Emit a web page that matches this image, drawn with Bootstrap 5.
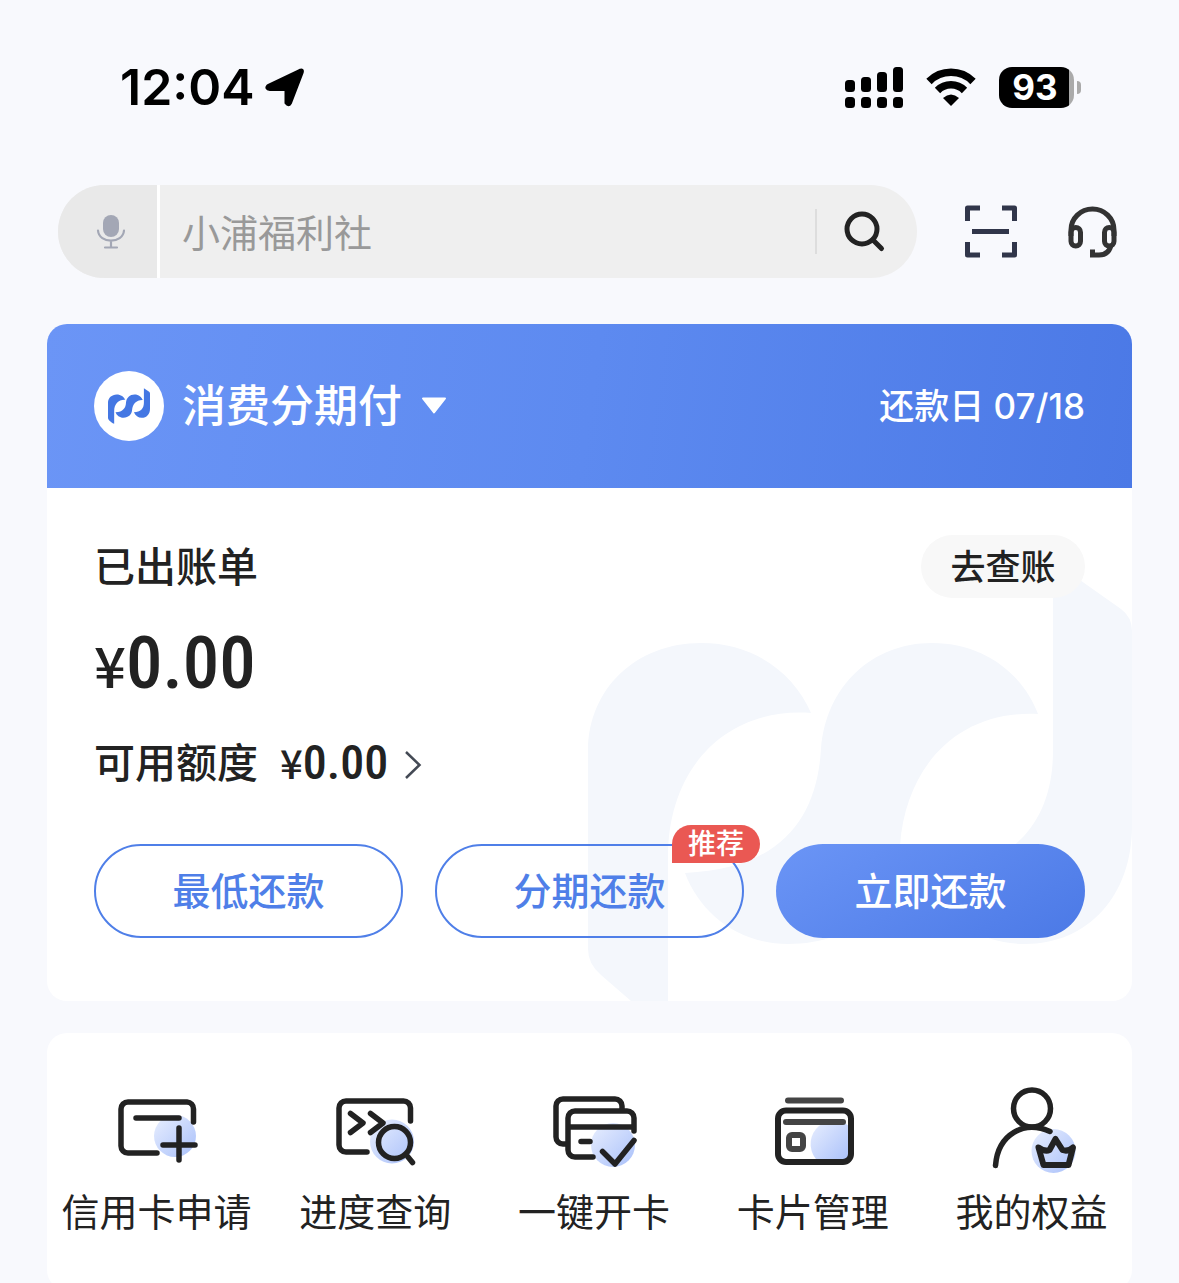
<!DOCTYPE html>
<html lang="zh-CN">
<head>
<meta charset="utf-8">
<meta name="viewport" content="width=device-width, initial-scale=1">
<title>消费分期付</title>
<link href="https://cdn.jsdelivr.net/npm/bootstrap@5.3.0/dist/css/bootstrap.min.css" rel="stylesheet">
<style>
  body { background: #f8f9fd; color: #222; font-family: Inter, "Noto Sans CJK SC", sans-serif; }
  svg { display: block; flex: none; }
  .status-bar { padding: 56px 98px 0 120px; height: 118px; color: #000; }
  .clock { font-size: 50px; line-height: 62px; font-weight: 600; margin-right: 10px; }
  .wifi-mark { margin: 0 23px; }
  .battery-body { width: 75px; height: 41px; border-radius: 13px; background: linear-gradient(90deg, #000 70px, #aaa 70px); color: #fff; font-size: 35px; line-height: 41px; font-weight: 700; padding-right: 3px; }
  .battery-tip { width: 4px; height: 13px; margin-left: 3px; border-radius: 0 6px 6px 0; background: #aaa; }
  .top-tools { margin-top: 67px; padding: 0 61px 0 58px; gap: 48px; }
  .search-pill { height: 93px; background: #efefef; }
  .mic-btn { flex: none; width: 102px; background: #e9e9e9; border: 0; border-right: 3px solid #fff; padding: 0 0 0 6px; }
  .search-box, .search-box:focus { background: transparent; font-size: 38px; line-height: 50px; padding: 3px 0 0 22px; box-shadow: none; color: #222; }
  .search-box::placeholder { color: #999; opacity: 1; }
  .search-go { flex: none; width: 100px; border: 0; background: transparent; padding: 0 4px 0 0; }
  .search-rule { flex: none; width: 2px; height: 45px; background: #ddd; }
  .plain-btn { border: 0; background: transparent; padding: 0; color: inherit; }
  .panel { margin: 0 47px; border-radius: 20px; background: #fff; }
  .bill { margin-top: 46px; }
  .bill-head { height: 164px; padding: 0 47px; color: #fff; background: linear-gradient(98deg, #6b95f6, #5d8af0 50%, #4b79e6); }
  .brand-disc { width: 70px; height: 70px; }
  .product-name { font-size: 44px; line-height: 60px; font-weight: 500; margin: 0 18px; }
  .due-date { font-size: 35px; line-height: 50px; font-weight: 500; }
  .bill-body { padding: 47px 47px 63px; }
  .watermark { top: 73px; right: 0; color: #f4f7fc; }
  .label-lg { font-size: 41px; line-height: 50px; font-weight: 500; }
  .check-btn { width: 164px; height: 63px; background: #f8f8f8; font-size: 35px; line-height: 50px; font-weight: 500; }
  .figure-text { font-family: "Roboto Condensed", Roboto, sans-serif; font-weight: 500; }
  .amount { margin-top: 25px; font-size: 73px; line-height: 80px; }
  .yen { font-family: "Noto Sans CJK SC", sans-serif; font-weight: 500; line-height: 1px; }
  .amount .yen { font-size: 56px; }
  .limit-row { margin-top: 35px; }
  .limit-value { font-size: 48px; line-height: 50px; margin: 0 16px 0 22px; }
  .limit-value .yen { font-size: 40px; }
  .pay-row { margin-top: 56px; gap: 32px; }
  .pay-btn { height: 94px; font-size: 38px; line-height: 50px; font-weight: 500; border: 2px solid #4f7fe8; color: #4f7fe8; background: transparent; padding: 0; }
  .pay-btn-main { border-color: transparent; color: #fff; background: linear-gradient(150deg, #6b95f6, #4b79e6) border-box; }
  .hint-tag { top: -21px; right: -18px; width: 88px; height: 38px; border-radius: 19px 19px 19px 0; background: #ea5853; color: #fff; font-size: 28px; line-height: 38px; }
  .services { margin-top: 32px; padding: 47px 0 53px; }
  .service-row { margin-right: -9px; }
  .service-name { font-size: 38px; line-height: 50px; margin-top: 7px; color: #222; }
</style>
<script src="https://cdn.jsdelivr.net/npm/bootstrap@5.3.0/dist/js/bootstrap.bundle.min.js"></script>
</head>
<body>
<svg width="0" height="0" class="position-absolute" aria-hidden="true">
  <defs>
    <linearGradient id="glow" x1="0" y1="0" x2="1" y2="1"><stop offset="0" stop-color="#e9effe"/><stop offset="1" stop-color="#a9c0fa"/></linearGradient>
    <symbol id="brand" viewBox="0 0 544 462">
      <path fill="currentColor" d="M0 190C0 128 48 82 113 82C166 82 206 112 223 152C140 146 80 205 80 296V462Q62 457 43 440L13 414Q0 403 0 388Z"/>
      <path fill="currentColor" d="M344 82C284 82 238 125 233 188C229 255 195 308 97 312C112 352 150 383 200 383C268 383 308 340 312 284C318 205 370 149 450 153C436 115 398 82 344 82Z"/>
      <path fill="currentColor" d="M465 0L533 48Q544 56 544 70V265C544 335 500 383 437 383C392 383 352 358 336 312C420 312 465 265 465 190Z"/>
    </symbol>
  </defs>
</svg>

<div class="vh-100 overflow-hidden">
  <div class="status-bar d-flex align-items-center justify-content-between">
    <div class="d-flex align-items-center">
      <span class="clock">12:04</span>
      <svg width="40" height="40" viewBox="0 0 40 40"><path d="M3 18.500 34.500 3.500Q38.500 2 37 6L25.500 36Q23.500 39.500 21 36V22.500H5Q0 21.500 3 18.500Z" stroke="#000" stroke-width="3" stroke-linejoin="round"/></svg>
    </div>
    <div class="d-flex align-items-center">
      <svg width="58" height="41" viewBox="0 0 58 41"><rect y="13" width="10" height="12" rx="3.500"/><rect x="16" y="10" width="10" height="15" rx="3.500"/><rect x="32" y="5" width="10" height="20" rx="3.500"/><rect x="48" width="10" height="25" rx="3.500"/><rect y="30" width="10" height="11" rx="3.500"/><rect x="16" y="30" width="10" height="11" rx="3.500"/><rect x="32" y="30" width="10" height="11" rx="3.500"/><rect x="48" y="30" width="10" height="11" rx="3.500"/></svg>
      <svg class="wifi-mark" width="50" height="38" viewBox="0 0 50 38"><g fill="none" stroke="#000" stroke-width="7.500"><path d="M3 13.500A31 31 0 0 1 47 13.500"/><path d="M11.500 22.500A19 19 0 0 1 38.500 22.500"/></g><path d="M25 38 17 30Q25 23 33 30Z"/></svg>
      <div class="battery-body text-center">93</div>
      <div class="battery-tip"></div>
    </div>
  </div>

  <form class="top-tools d-flex align-items-center">
    <div class="search-pill d-flex align-items-stretch flex-grow-1 rounded-pill overflow-hidden">
      <button type="button" class="mic-btn d-flex align-items-center justify-content-center" aria-label="语音">
        <svg width="30" height="36" viewBox="0 0 30 36"><rect x="7" y="1" width="16" height="22" rx="8" fill="#a3a7b5"/><path d="M2 16.500C3 30 27 30 28 16.500M15 27V33M9 33.500H21" fill="none" stroke="#a3a7b5" stroke-width="2.200" stroke-linecap="round"/></svg>
      </button>
      <input class="search-box form-control border-0 rounded-0" type="text" placeholder="小浦福利社" aria-label="搜索">
      <span class="search-rule align-self-center"></span>
      <button type="submit" class="search-go d-flex align-items-center justify-content-center" aria-label="查找">
        <svg width="42" height="42" viewBox="0 0 42 42" fill="none" stroke="#222" stroke-width="5" stroke-linecap="round"><circle cx="18" cy="18" r="15"/><path d="M29 29 37.500 37.500"/></svg>
      </button>
    </div>
    <button type="button" class="plain-btn" aria-label="扫一扫"><svg width="53" height="53" viewBox="0 0 53 53" fill="none" stroke="#31364a" stroke-width="5" stroke-linejoin="round"><path d="M15 3H2.500V16M37 3H49.500V16M15 50H2.500V37M37 50H49.500V37"/><path d="M7 26.500H44"/></svg></button>
    <button type="button" class="plain-btn" aria-label="客服"><svg width="52" height="52" viewBox="-2 0 52 52" fill="none" stroke="#333" stroke-width="5"><path d="M3 30V24A21.500 21 0 0 1 46 24V30"/><rect x="3" y="21.500" width="9.500" height="18.500" rx="4.750"/><rect x="36.500" y="21.500" width="9.500" height="18.500" rx="4.750"/><path d="M43 39Q41 49 31 49H24.500V43.500"/></svg></button>
  </form>

  <main>
    <section class="panel bill overflow-hidden">
      <div class="bill-head d-flex align-items-center justify-content-between">
        <button type="button" class="plain-btn d-flex align-items-center">
          <span class="brand-disc rounded-circle bg-white d-flex align-items-center justify-content-center"><svg width="42" height="36" color="#4477e3"><use href="#brand"/></svg></span>
          <span class="product-name">消费分期付</span>
          <svg width="28" height="18" viewBox="0 0 28 18"><path d="M3 1.500H25L14 15.500Z" fill="#fff" stroke="#fff" stroke-width="2" stroke-linejoin="round"/></svg>
        </button>
        <span class="due-date">还款日 07/18</span>
      </div>
      <div class="bill-body position-relative overflow-hidden">
        <svg class="watermark position-absolute" width="544" height="462"><use href="#brand"/></svg>
        <div class="position-relative">
          <div class="d-flex align-items-center justify-content-between">
            <span class="label-lg">已出账单</span>
            <button type="button" class="plain-btn check-btn rounded-pill">去查账</button>
          </div>
          <div class="amount figure-text"><span class="yen">¥</span>0.00</div>
          <a href="#" class="limit-row d-flex align-items-center text-reset text-decoration-none">
            <span class="label-lg">可用额度</span>
            <span class="limit-value figure-text"><span class="yen">¥</span>0.00</span>
            <svg width="18" height="32" viewBox="0 0 18 32"><path d="M2 5 15.500 18 2 31" fill="none" stroke="#444a55" stroke-width="2.500"/></svg>
          </a>
          <div class="pay-row d-flex">
            <button type="button" class="pay-btn rounded-pill flex-fill w-100">最低还款</button>
            <button type="button" class="pay-btn rounded-pill flex-fill w-100 position-relative">分期还款<span class="hint-tag position-absolute">推荐</span></button>
            <button type="button" class="pay-btn pay-btn-main rounded-pill flex-fill w-100">立即还款</button>
          </div>
        </div>
      </div>
    </section>

    <nav class="panel services overflow-hidden">
      <div class="service-row d-flex text-center">
        <a href="#" class="w-100 text-decoration-none">
          <svg class="mx-auto" width="108" height="100" fill="none" stroke="#222" stroke-width="5.500" stroke-linecap="round"><circle cx="73" cy="56" r="21" fill="url(#glow)" stroke="none"/><path d="M91.500 42V29A7 7 0 0 0 85 22H26A7 7 0 0 0 19 29V66A7 7 0 0 0 26 73H55M34 38H77M77 48V80M61 65H93"/></svg>
          <div class="service-name">信用卡申请</div>
        </a>
        <a href="#" class="w-100 text-decoration-none">
          <svg class="mx-auto" width="108" height="100" fill="none" stroke="#222" stroke-width="5.500" stroke-linecap="round" stroke-linejoin="round"><circle cx="71" cy="61.500" r="22" fill="url(#glow)" stroke="none"/><path d="M89.500 41V28A7 7 0 0 0 82.500 21H25A7 7 0 0 0 18 28V65A7 7 0 0 0 25 72H46M29.500 33.500 42 43 29.500 52.500M49.500 33.500 62 43 49.500 52.500M87 77 91.500 82.500"/><circle cx="73.500" cy="62.500" r="16"/></svg>
          <div class="service-name">进度查询</div>
        </a>
        <a href="#" class="w-100 text-decoration-none">
          <svg class="mx-auto" width="108" height="100" fill="none" stroke="#222" stroke-width="5.500" stroke-linecap="round" stroke-linejoin="round"><circle cx="73" cy="65" r="22" fill="url(#glow)" stroke="none"/><path d="M82 30V26A7 7 0 0 0 75 19H23A7 7 0 0 0 16 26V57A7 7 0 0 0 23 64H27M94 51V38A7 7 0 0 0 87 31H35A7 7 0 0 0 28 38V70A7 7 0 0 0 35 77H53M28 47H94M41 61.500H50M62.500 71.500 75 84 94 60.500"/></svg>
          <div class="service-name">一键开卡</div>
        </a>
        <a href="#" class="w-100 text-decoration-none">
          <svg class="mx-auto" width="108" height="100" fill="none" stroke="#444" stroke-width="6" stroke-linecap="round"><path d="M90 52V82H60A22 22 0 1 1 90 46Z" fill="url(#glow)" stroke="none"/><path d="M29 20.500H82M27 42H84"/><rect x="30" y="55" width="14" height="14" rx="3"/><rect x="19" y="30.500" width="73" height="51.500" rx="8" stroke="#222"/></svg>
          <div class="service-name">卡片管理</div>
        </a>
        <a href="#" class="w-100 text-decoration-none">
          <svg class="mx-auto" width="108" height="100" fill="none" stroke="#222" stroke-width="5.500" stroke-linecap="round" stroke-linejoin="round"><circle cx="75.500" cy="71" r="22" fill="url(#glow)" stroke="none"/><circle cx="54" cy="28.500" r="18.500"/><path d="M17.500 85.500C20 54 46 40 72 51.500"/><path stroke-width="6" d="M60.500 67.500Q67 72 71.500 70L77.500 59 84.500 70Q90 72 95 67.500L90.500 85H65.500Z"/></svg>
          <div class="service-name">我的权益</div>
        </a>
      </div>
    </nav>
  </main>
</div>
</body>
</html>
